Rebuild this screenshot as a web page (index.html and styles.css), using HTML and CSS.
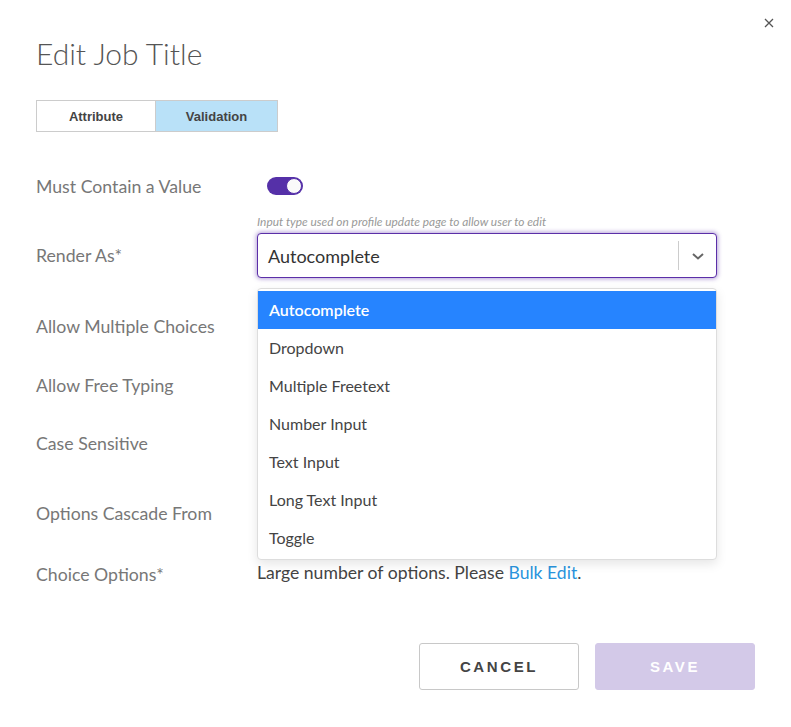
FILE: index.html
```html
<!DOCTYPE html>
<html lang="en">
  <head>
    <meta charset="UTF-8" />
    <meta name="viewport" content="width=device-width, initial-scale=1.0" />
    <title>Edit Job Title</title>
    <link rel="stylesheet" href="styles.css">
  </head>
  <body>
    <div class="modal">
      <button class="close-btn">
        <svg width="10" height="10" viewBox="0 0 10 10">
          <path d="M1 1 L9 9 M9 1 L1 9" stroke="#555" stroke-width="1.3" fill="none" />
        </svg>
      </button>
      <h1 class="title">Edit Job Title</h1>

      <div class="tabs">
        <button class="tab">Attribute</button>
        <button class="tab active">Validation</button>
      </div>

      <div class="form">
        <div class="row row-toggle">
          <div class="label">Must Contain a Value</div>
          <div class="control">
            <span class="toggle"><span class="knob"></span></span>
          </div>
        </div>

        <div class="row row-select">
          <div class="label label-select">Render As*</div>
          <div class="control">
            <div class="helper">Input type used on profile update page to allow user to edit</div>
            <div class="select-wrap">
              <div class="select">
                <span class="select-value">Autocomplete</span>
                <span class="select-sep"></span>
                <span class="select-arrow">
                  <svg width="14" height="10" viewBox="0 0 14 10">
                    <path d="M2 3 L7 7.5 L12 3" stroke="#666" stroke-width="2" fill="none" />
                  </svg>
                </span>
              </div>
              <ul class="menu">
                <li class="option selected">Autocomplete</li>
                <li class="option">Dropdown</li>
                <li class="option">Multiple Freetext</li>
                <li class="option">Number Input</li>
                <li class="option">Text Input</li>
                <li class="option">Long Text Input</li>
                <li class="option">Toggle</li>
              </ul>
            </div>
          </div>
        </div>

        <div class="row row-3">
          <div class="label">Allow Multiple Choices</div>
        </div>
        <div class="row row-4">
          <div class="label">Allow Free Typing</div>
        </div>
        <div class="row row-5">
          <div class="label">Case Sensitive</div>
        </div>
        <div class="row row-6">
          <div class="label">Options Cascade From</div>
        </div>
        <div class="row row-7">
          <div class="label">Choice Options*</div>
          <div class="control note">
            Large number of options. Please <a href="#" class="link">Bulk Edit</a>.
          </div>
        </div>
      </div>

      <div class="footer">
        <button class="btn btn-cancel">CANCEL</button>
        <button class="btn btn-save">SAVE</button>
      </div>
    </div>
  </body>
</html>
```

FILE: styles.css
```css
* {
  margin: 0;
  padding: 0;
  box-sizing: border-box;
}

body {
  background: #fff;
  font-family: Lato, "Open Sans", sans-serif;
  color: #444;
}

.modal {
  position: relative;
  width: 791px;
  height: 727px;
  padding: 36px 36px 0 36px;
}

.close-btn {
  position: absolute;
  top: 18px;
  right: 17px;
  width: 10px;
  height: 10px;
  background: none;
  border: none;
  cursor: pointer;
  display: flex;
}

.title {
  font-family: Lato, sans-serif;
  font-weight: 300;
  font-size: 30px;
  line-height: 34px;
  color: #555;
}

.tabs {
  display: flex;
  margin-top: 30px;
}

.tab {
  height: 32px;
  border: 1px solid #cccccc;
  background: #fff;
  font-family: "Liberation Sans", Arial, sans-serif;
  font-weight: bold;
  font-size: 13px;
  color: #444;
  cursor: pointer;
}

.tab:first-child {
  width: 120px;
}

.tab.active {
  width: 122px;
  border-left: none;
  background: #b9e1f8;
}

.form {
  margin-top: 34px;
}

.row {
  display: flex;
  align-items: center;
}

.label {
  width: 221px;
  flex-shrink: 0;
  font-size: 17.7px;
  color: #777;
}

.control {
  flex: 1;
}

.row-toggle {
  height: 40px;
}

.toggle {
  display: flex;
  justify-content: flex-end;
  align-items: center;
  width: 36px;
  height: 18px;
  margin-left: 10px;
  border-radius: 9px;
  background: #5530a8;
  padding: 1px;
}

.knob {
  width: 16px;
  height: 16px;
  border-radius: 50%;
  background: #fafafa;
  border: 1px solid #5530a8;
}

.row-select {
  align-items: flex-end;
  height: 74px;
}

.label-select {
  line-height: 45px;
  padding-bottom: 2px;
}

.helper {
  font-style: italic;
  font-size: 11.9px;
  line-height: 22px;
  color: #999;
}

.select-wrap {
  position: relative;
  width: 460px;
  margin-bottom: 2px;
}

.select {
  display: flex;
  align-items: center;
  height: 45px;
  border: 1px solid #5b2fa8;
  border-radius: 4px;
  box-shadow: 0 0 4px 1px rgba(91, 47, 168, 0.45);
  background: #fff;
  padding-left: 10px;
}

.select-value {
  flex: 1;
  font-size: 18px;
  color: #333;
}

.select-sep {
  width: 1px;
  height: 29px;
  background: #cccccc;
}

.select-arrow {
  width: 37px;
  display: flex;
  justify-content: center;
  align-items: center;
}

.menu {
  position: absolute;
  top: 55px;
  left: 0;
  width: 460px;
  list-style: none;
  background: #fff;
  border: 1px solid #dddddd;
  border-radius: 4px;
  box-shadow: 0 4px 11px rgba(0, 0, 0, 0.1);
  padding: 2px 0;
  z-index: 10;
}

.option {
  height: 38px;
  line-height: 38px;
  padding-left: 11px;
  font-size: 16px;
  color: #444;
}

.option.selected {
  background: #2684ff;
  color: #fff;
  font-weight: 600;
}

.row-3 {
  height: 60px;
  margin-top: 16px;
}

.row-4 {
  height: 58px;
}

.row-5 {
  height: 58px;
}

.row-6 {
  height: 82px;
}

.row-7 {
  height: 40px;
}

.note {
  font-size: 17.6px;
  color: #444;
  margin-top: -4px;
}

.link {
  color: #2a94dd;
  text-decoration: none;
}

.footer {
  display: flex;
  justify-content: flex-end;
  gap: 16px;
  margin-top: 49px;
}

.btn {
  width: 160px;
  height: 47px;
  border-radius: 3px;
  font-family: "Liberation Sans", Arial, sans-serif;
  font-weight: bold;
  font-size: 15px;
  letter-spacing: 2.6px;
  cursor: pointer;
}

.btn-cancel {
  background: #fff;
  border: 1px solid #c8c8c8;
  color: #444;
}

.btn-save {
  background: #d3c9e8;
  border: 1px solid #d3c9e8;
  color: #fff;
}
```
